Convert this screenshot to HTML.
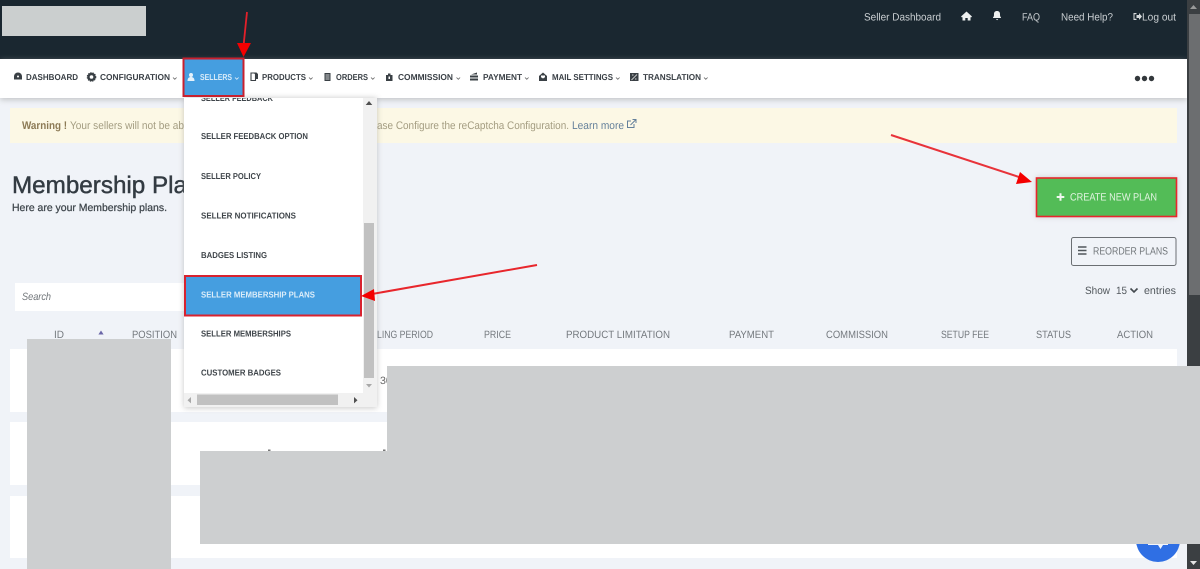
<!DOCTYPE html>
<html><head><meta charset="utf-8"><style>
html,body{margin:0;padding:0;width:1200px;height:569px;overflow:hidden;background:#f0f3f8}
svg#r{display:block;position:absolute;left:0;top:0;filter:blur(.35px)}
text{font-family:"Liberation Sans",sans-serif}
.n{font-size:8.6px;font-weight:700;fill:#3a4046}
.m{font-size:8.6px;font-weight:700;fill:#3f454a}
.h{font-size:10.6px;fill:#74797e}
.t{font-size:10.6px;fill:#c9ced1}
</style></head><body>
<svg id="r" width="1200" height="569" viewBox="0 0 1200 569" xmlns="http://www.w3.org/2000/svg" text-rendering="geometricPrecision">
<defs>
<filter id="s" x="-20%" y="-20%" width="140%" height="140%"><feGaussianBlur stdDeviation="3"/></filter>
</defs>
<rect width="1200" height="569" fill="#f0f3f8"/>
<!-- header -->
<rect width="1200" height="59" fill="#1a2730"/>
<rect x="2" y="6" width="144" height="30" fill="#cbcfcf"/>
<!-- nav -->
<rect x="0" y="60" width="1187" height="40" fill="#999" opacity=".5" filter="url(#s)"/>
<rect x="0" y="59" width="1187" height="39" fill="#fff"/>
<!-- warning -->
<rect x="10" y="108" width="1167" height="35" fill="#fcf8e5"/>
<text x="22" y="129" font-size="11" font-weight="700" fill="#8c7a55" textLength="45" lengthAdjust="spacingAndGlyphs">Warning !</text>
<text x="70" y="129" font-size="11" fill="#a39c80" textLength="114" lengthAdjust="spacingAndGlyphs">Your sellers will not be ab</text>
<text x="377" y="129" font-size="11" fill="#a39c80" textLength="192" lengthAdjust="spacingAndGlyphs">ase Configure the reCaptcha Configuration.</text>
<text x="572" y="129" font-size="11" fill="#64809a" textLength="52" lengthAdjust="spacingAndGlyphs">Learn more</text>
<path d="M634 124v3.500h-6.500v-6.500h3.500M630.500 125l5-5M632.500 119.500h3.500v3.500" fill="none" stroke="#64809a" stroke-width="1"/>
<!-- top links -->
<text class="t" x="864" y="20.500" textLength="77" lengthAdjust="spacingAndGlyphs">Seller Dashboard</text>
<text class="t" x="1022" y="20.500" textLength="18" lengthAdjust="spacingAndGlyphs">FAQ</text>
<text class="t" x="1061" y="20.500" textLength="52" lengthAdjust="spacingAndGlyphs">Need Help?</text>
<text class="t" x="1142" y="20.500" textLength="34" lengthAdjust="spacingAndGlyphs">Log out</text>
<path d="M961 16.500l5.500-5 5.500 5-1 1-4.500-4-4.500 4zM962.500 17l4-3.500 4 3.500v3.500h-2.800v-2.500h-2.400v2.500h-2.800z" fill="#eef0f0"/>
<path d="M993 17.500c1-1 1-2 1-3.500 0-2 1.200-3 3-3s3 1 3 3c0 1.500 0 2.500 1 3.500v.5h-8zM996 19h2.200l-1.100 1.200z" fill="#eef0f0"/>
<path d="M1133.500 13h3v1.200h-2v4.600h2v1.200h-3zM1136.500 15h2.500v-2l3 3.500-3 3.500v-2h-2.500z" fill="#d5d9da"/>
<!-- nav items -->
<text class="n" x="26" y="80" textLength="52" lengthAdjust="spacingAndGlyphs">DASHBOARD</text>
<text class="n" x="100" y="80" textLength="70" lengthAdjust="spacingAndGlyphs">CONFIGURATION</text>
<text class="n" x="262" y="80" textLength="44" lengthAdjust="spacingAndGlyphs">PRODUCTS</text>
<text class="n" x="336" y="80" textLength="32" lengthAdjust="spacingAndGlyphs">ORDERS</text>
<text class="n" x="398" y="80" textLength="55" lengthAdjust="spacingAndGlyphs">COMMISSION</text>
<text class="n" x="483" y="80" textLength="39" lengthAdjust="spacingAndGlyphs">PAYMENT</text>
<text class="n" x="552" y="80" textLength="61" lengthAdjust="spacingAndGlyphs">MAIL SETTINGS</text>
<text class="n" x="643" y="80" textLength="58" lengthAdjust="spacingAndGlyphs">TRANSLATION</text>
<!-- nav icons -->
<path d="M14 79.500v-3a3.900 3.900 0 0 1 8 0v3z" fill="#3a4045"/><circle cx="18" cy="76.500" r="1" fill="#fff"/>
<circle cx="91.500" cy="77" r="3" fill="none" stroke="#3a4045" stroke-width="2.400"/><circle cx="91.500" cy="77" r="4.200" fill="none" stroke="#3a4045" stroke-width="1.200" stroke-dasharray="1.300 1"/>
<path d="M251 73h3.500l1 1v6.500h-4.500z" fill="none" stroke="#3a4045" stroke-width="1.100"/><path d="M254 72.500h2.500l1.500 1.500v5h-2v-5l-2-1.500z" fill="#3a4045"/>
<path d="M324.500 73h6v8h-6z" fill="#3a4045"/><path d="M325.500 75h4M325.500 77h4M325.500 79h4" stroke="#fff" stroke-width=".7"/>
<path d="M386 75h2v-1.500h2.500v1.500h2v6h-6.500z" fill="#3a4045"/><rect x="388.500" y="76.500" width="1.500" height="2.500" fill="#fff"/>
<path d="M470 79h8v2h-8zM470 76h8v2h-8zM471 75l6-2v2z" fill="#3a4045" transform="translate(0 -.5)"/>
<path d="M539 76l4-3.500 4 3.500v5h-8z" fill="#3a4045"/><path d="M541 75.500h4v1.700l-2 1.300-2-1.300z" fill="#fff"/>
<rect x="630" y="73" width="8.500" height="8" fill="#3a4045"/><path d="M631.500 80l5.500-5.500M632 75h1.500M635 79h1.500" stroke="#fff" stroke-width=".7"/>
<g fill="none" stroke="#666" stroke-width=".8"><path d="M173 77.500l1.800 1.800 1.800-1.800M309 77.500l1.800 1.800 1.800-1.800M371 77.500l1.800 1.800 1.800-1.800M456.500 77.500l1.800 1.800 1.800-1.800M525 77.500l1.800 1.800 1.800-1.800M616 77.500l1.800 1.800 1.800-1.800M704 77.500l1.800 1.800 1.800-1.800"/></g>
<circle cx="1137.500" cy="78.500" r="2.700" fill="#33383c"/><circle cx="1144.500" cy="78.500" r="2.700" fill="#33383c"/><circle cx="1151.500" cy="78.500" r="2.700" fill="#33383c"/>
<!-- heading -->
<text x="12" y="193" font-size="24" fill="#333b42" stroke="#333b42" stroke-width=".45" textLength="175" lengthAdjust="spacingAndGlyphs">Membership Pla</text>
<text x="12" y="211" font-size="10.500" fill="#3f464c" stroke="#3f464c" stroke-width=".25" textLength="155" lengthAdjust="spacingAndGlyphs">Here are your Membership plans.</text>
<!-- search -->
<rect x="15" y="283" width="172" height="28" fill="#fff"/>
<text x="22" y="300" font-size="10.500" font-style="italic" fill="#6f7478" textLength="29" lengthAdjust="spacingAndGlyphs">Search</text>
<!-- create button -->
<rect x="1036" y="177" width="141" height="40" fill="#aaa" filter="url(#s)" opacity=".5"/>
<rect x="1036.500" y="178" width="140" height="38.500" fill="#53bc57" stroke="#e8262c" stroke-width="1.600"/>
<path d="M1059.500 193.200h2v2.800h2.800v2h-2.800v2.800h-2v-2.800h-2.800v-2h2.800z" fill="#f0f7ef"/>
<text x="1070" y="200.500" font-size="10.600" fill="#e3f4e2" textLength="87" lengthAdjust="spacingAndGlyphs">CREATE NEW PLAN</text>
<!-- reorder -->
<rect x="1071.500" y="237.500" width="104.500" height="28" rx="2" fill="none" stroke="#6b6f73"/>
<path d="M1078 247h8.500M1078 250.500h8.500M1078 254h8.500" stroke="#50565b" stroke-width="1.400"/>
<text x="1093" y="254.500" font-size="10.600" fill="#71767a" textLength="75" lengthAdjust="spacingAndGlyphs">REORDER PLANS</text>
<!-- show -->
<text x="1085" y="294" font-size="10.600" fill="#51575c" textLength="25" lengthAdjust="spacingAndGlyphs">Show</text>
<text x="1116" y="294" font-size="10.600" fill="#51575c" textLength="11" lengthAdjust="spacingAndGlyphs">15</text>
<text x="1144" y="294" font-size="10.600" fill="#51575c" textLength="32" lengthAdjust="spacingAndGlyphs">entries</text>
<path d="M1130.500 288.500l3.500 3.500 3.500-3.500" fill="none" stroke="#444a4f" stroke-width="1.600"/>
<!-- table head -->
<text class="h" x="54" y="338" textLength="10" lengthAdjust="spacingAndGlyphs">ID</text>
<text class="h" x="132" y="338" textLength="45" lengthAdjust="spacingAndGlyphs">POSITION</text>
<text class="h" x="377" y="338" textLength="56" lengthAdjust="spacingAndGlyphs">LING PERIOD</text>
<text class="h" x="484" y="338" textLength="27" lengthAdjust="spacingAndGlyphs">PRICE</text>
<text class="h" x="566" y="338" textLength="104" lengthAdjust="spacingAndGlyphs">PRODUCT LIMITATION</text>
<text class="h" x="729" y="338" textLength="45" lengthAdjust="spacingAndGlyphs">PAYMENT</text>
<text class="h" x="826" y="338" textLength="62" lengthAdjust="spacingAndGlyphs">COMMISSION</text>
<text class="h" x="941" y="338" textLength="48" lengthAdjust="spacingAndGlyphs">SETUP FEE</text>
<text class="h" x="1036" y="338" textLength="35" lengthAdjust="spacingAndGlyphs">STATUS</text>
<text class="h" x="1117" y="338" textLength="36" lengthAdjust="spacingAndGlyphs">ACTION</text>
<path d="M101 330.500l2.600 4h-5.200z" fill="#6a66a8"/>
<!-- rows -->
<rect x="10" y="349" width="1167" height="63" fill="#fff"/>
<rect x="10" y="422" width="1167" height="63" fill="#fff"/>
<rect x="10" y="496" width="1167" height="62" fill="#fff"/>
<text x="380" y="384" font-size="10.600" fill="#666">30</text>
<!-- chat button -->
<circle cx="1158" cy="540" r="22" fill="#2f6fe4"/>
<path d="M1148 532h20v13h-5l-2.500 4-2.500-4h-10z" fill="#f2f5fb"/>
<!-- redactions -->
<rect x="268" y="449.500" width="2.500" height="2" fill="#777"/>
<rect x="383" y="449.500" width="2.500" height="2" fill="#777"/>
<rect x="27" y="339" width="144" height="230" fill="#cdcfd0"/>
<rect x="387" y="366" width="813" height="86" fill="#cdcfd0"/>
<rect x="200" y="451" width="1000" height="93" fill="#cdcfd0"/>
<!-- dropdown -->
<rect x="184" y="98" width="193" height="310" fill="#888" opacity=".45" filter="url(#s)"/>
<rect x="184" y="98" width="193" height="309" fill="#fff"/>
<rect x="363" y="98" width="14" height="309" fill="#f1f1f1"/>
<rect x="184" y="393" width="193" height="14" fill="#f1f1f1"/>
<rect x="364" y="223" width="10" height="155" fill="#c1c1c1"/>
<rect x="197" y="394.500" width="141" height="10.500" fill="#c1c1c1"/>
<path d="M369 101l3.300 4h-6.600z" fill="#505050"/>
<path d="M366 384h6l-3 3.500z" fill="#a8a8a8"/>
<path d="M191 397l-3.500 3.200 3.500 3.200z" fill="#a8a8a8"/>
<path d="M354 397l3.500 3.200-3.500 3.200z" fill="#505050"/>
<rect x="185" y="276" width="176" height="39.500" fill="#459ee0" stroke="#d8232f" stroke-width="2"/>
<svg x="184" y="98" width="179" height="295" viewBox="184 98 179 295">
<text class="m" x="201" y="101" textLength="72" lengthAdjust="spacingAndGlyphs">SELLER FEEDBACK</text>
</svg>
<text class="m" x="201" y="139" textLength="107" lengthAdjust="spacingAndGlyphs">SELLER FEEDBACK OPTION</text>
<text class="m" x="201" y="179" textLength="60" lengthAdjust="spacingAndGlyphs">SELLER POLICY</text>
<text class="m" x="201" y="218.500" textLength="95" lengthAdjust="spacingAndGlyphs">SELLER NOTIFICATIONS</text>
<text class="m" x="201" y="258" textLength="66" lengthAdjust="spacingAndGlyphs">BADGES LISTING</text>
<text class="m" x="201" y="297.500" textLength="114" lengthAdjust="spacingAndGlyphs" style="fill:#dcedf9">SELLER MEMBERSHIP PLANS</text>
<text class="m" x="201" y="336.500" textLength="90" lengthAdjust="spacingAndGlyphs">SELLER MEMBERSHIPS</text>
<text class="m" x="201" y="375.500" textLength="80" lengthAdjust="spacingAndGlyphs">CUSTOMER BADGES</text>
<!-- sellers active -->
<rect x="183.500" y="58.500" width="60" height="37.500" fill="#459ee0" stroke="#c8202e" stroke-width="2"/>
<text x="200" y="80" font-size="8.600" font-weight="700" fill="#d9ecf9" textLength="32" lengthAdjust="spacingAndGlyphs">SELLERS</text>
<circle cx="191" cy="75" r="2" fill="#e6f2fb"/><path d="M187.500 81c0-3 1.500-4 3.500-4s3.500 1 3.500 4z" fill="#e6f2fb"/>
<path d="M235 77.500l1.800 1.800 1.800-1.800" fill="none" stroke="#e6f2fb" stroke-width=".8"/>
<!-- arrows -->
<path d="M247 12L243.500 46" stroke="#e3202a" stroke-width="1.800"/>
<path d="M237 43L251 43L243.500 57z" fill="#f40000"/>
<path d="M891 135L1022 178" stroke="#e8333a" stroke-width="2"/>
<path d="M1032 182L1020 172L1016 184z" fill="#f40000"/>
<path d="M537 265L372 294" stroke="#e8262c" stroke-width="2"/>
<path d="M361 296L374 289L375 301z" fill="#f40000"/>
<!-- page scrollbar -->
<rect x="1187" y="0" width="13" height="569" fill="#3b3f42"/>
<rect x="1189" y="14" width="11" height="281" fill="#6c6e70"/>
<path d="M1193.500 5l3.500 4h-7z" fill="#9a9a9a"/>
<path d="M1190 561h7l-3.500 4z" fill="#e4e4e4"/>
<rect x="1187" y="366" width="13" height="178" fill="#cdcfd0"/>
</svg>
</body></html>
